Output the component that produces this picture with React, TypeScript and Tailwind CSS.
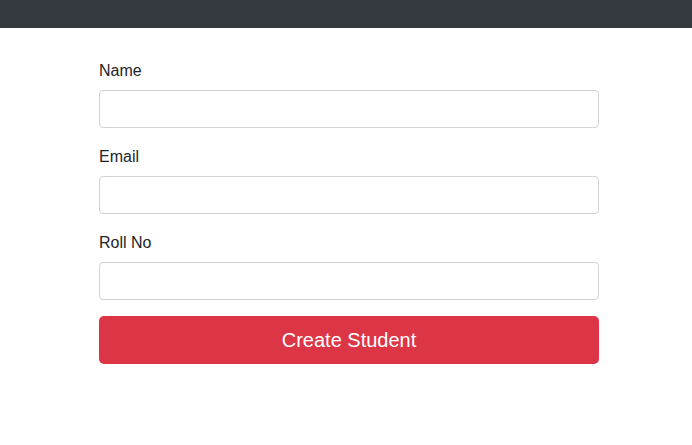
import React from "react";

const fields = [
  { id: "name", label: "Name", type: "text" },
  { id: "email", label: "Email", type: "email" },
  { id: "rollno", label: "Roll No", type: "text" },
];

export default function App() {
  return (
    <div className="min-h-screen bg-white font-['Liberation_Sans',Arial,sans-serif] text-base text-[#212529]">
      <header className="h-7 bg-[#343a40]" />
      <main className="pt-[30px] pr-4 pl-[22px]">
        <form
          className="mx-auto flex w-full max-w-[500px] flex-col gap-4"
          onSubmit={(event) => event.preventDefault()}
        >
          {fields.map((field) => (
            <div key={field.id} className="flex flex-col items-start">
              <label htmlFor={field.id} className="mb-1.5 leading-[26px]">
                {field.label}
              </label>
              <input
                id={field.id}
                name={field.id}
                type={field.type}
                className="h-[38px] w-full rounded border border-[#ced4da] bg-white px-3 text-[#495057] outline-none focus:border-[#80bdff]"
              />
            </div>
          ))}
          <button
            type="submit"
            className="h-12 w-full cursor-pointer rounded-[5px] bg-[#dc3545] text-xl text-white hover:bg-[#c82333]"
          >
            Create Student
          </button>
        </form>
      </main>
    </div>
  );
}
